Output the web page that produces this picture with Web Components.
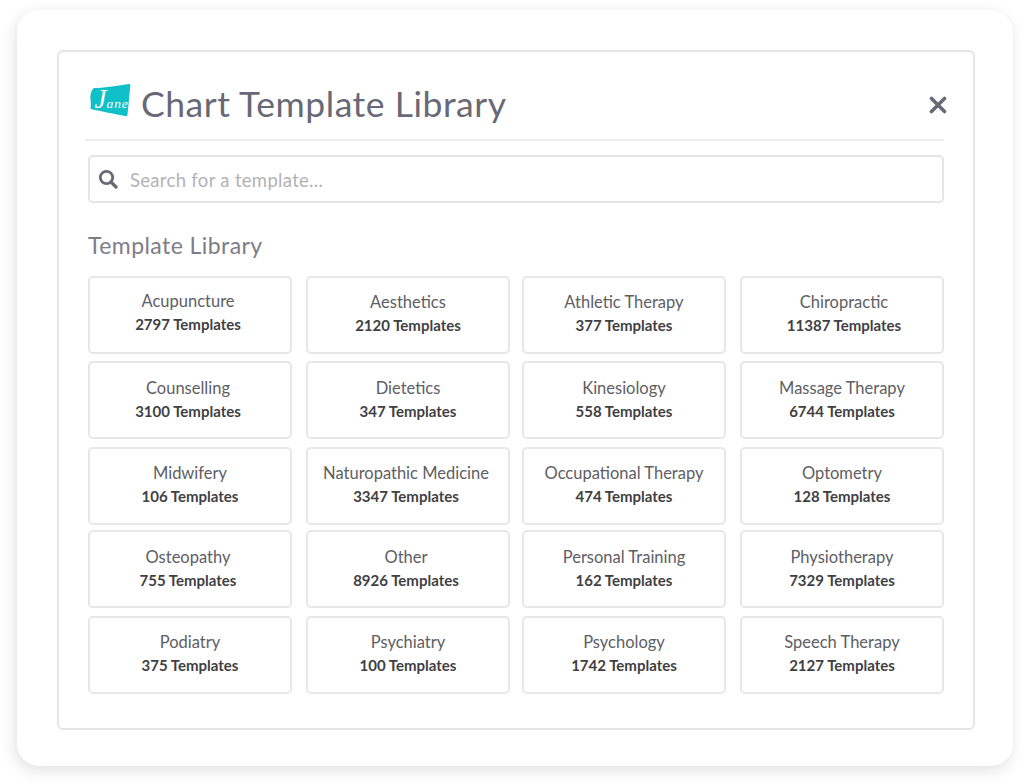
<!DOCTYPE html>
<html lang="en"><head><meta charset="utf-8"><title>Chart Template Library</title>
<style>
html,body{margin:0;padding:0;background:#fff}
body{width:1024px;height:784px;overflow:hidden;font-family:Lato,"Noto Sans",sans-serif}
</style></head>
<body>
<app-frame>
  <library-panel>
    <panel-header slot="header">Chart Template Library</panel-header>
    <search-box slot="search" placeholder="Search for a template..."></search-box>
    <span slot="title">Template Library</span>
    <template-grid>
      <template-card dx="-2" top="25" name="Acupuncture" count="2797 Templates"></template-card>
      <template-card top="26" name="Aesthetics" count="2120 Templates"></template-card>
      <template-card top="26" name="Athletic Therapy" count="377 Templates"></template-card>
      <template-card dx="2" top="26" name="Chiropractic" count="11387 Templates"></template-card>
      <template-card dx="-2" top="27" name="Counselling" count="3100 Templates"></template-card>
      <template-card top="27" name="Dietetics" count="347 Templates"></template-card>
      <template-card top="27" name="Kinesiology" count="558 Templates"></template-card>
      <template-card top="27" name="Massage Therapy" count="6744 Templates"></template-card>
      <template-card top="26" name="Midwifery" count="106 Templates"></template-card>
      <template-card dx="-2" top="26" name="Naturopathic Medicine" count="3347 Templates"></template-card>
      <template-card top="26" name="Occupational Therapy" count="474 Templates"></template-card>
      <template-card top="26" name="Optometry" count="128 Templates"></template-card>
      <template-card dx="-2" top="27" name="Osteopathy" count="755 Templates"></template-card>
      <template-card dx="-2" top="27" name="Other" count="8926 Templates"></template-card>
      <template-card top="27" name="Personal Training" count="162 Templates"></template-card>
      <template-card top="27" name="Physiotherapy" count="7329 Templates"></template-card>
      <template-card top="26" name="Podiatry" count="375 Templates"></template-card>
      <template-card top="26" name="Psychiatry" count="100 Templates"></template-card>
      <template-card top="26" name="Psychology" count="1742 Templates"></template-card>
      <template-card top="26" name="Speech Therapy" count="2127 Templates"></template-card>
    </template-grid>
  </library-panel>
</app-frame>
<script>
function def(tag, html, init){
  customElements.define(tag, class extends HTMLElement{
    constructor(){super();this.attachShadow({mode:'open'}).innerHTML=html;}
    connectedCallback(){if(init)init(this,this.shadowRoot);}
  });
}
def('app-frame',`<style>
:host{display:block;box-sizing:border-box;width:996px;height:756px;margin:10px 0 0 17px;padding:40px 38px 36px 40px;background:#fff;border-radius:22px;box-shadow:-2px 5px 16px rgba(0,0,0,.11),0 0 6px rgba(0,0,0,.025)}
</style><slot></slot>`);
def('library-panel',`<style>
:host{display:block;box-sizing:border-box;width:918px;height:680px;border:2px solid #e5e5e7;border-radius:6px;padding:0 29px;color:#686877}
.t{font-size:23px;letter-spacing:.43px;color:#7d7d88;line-height:30px;margin:27px 0 16px}
</style><slot name="header"></slot><slot name="search"></slot><div class="t"><slot name="title"></slot></div><slot></slot>`);
def('panel-header',`<style>
:host{display:flex;align-items:center;box-sizing:border-box;height:89px;margin:0 0 14px -3px;width:859px;border-bottom:2px solid #eeeef0;padding:17px 0 0 4px}
svg.logo{width:42px;height:36px;flex:none;margin-right:10px;margin-top:-7px}
.h{font-size:35.500px;letter-spacing:.54px;color:#686876;line-height:44px;flex:1;white-space:nowrap}
svg.x{width:18px;height:18px;flex:none;margin-right:-3px;margin-top:2px}
</style>
<svg class="logo" viewBox="0 0 42 36"><path d="M5 5 C14 5 26 3 40 1 C41 1 41.500 2 41.300 3 L38.500 31.500 C38.400 33 37.500 33.500 36 33 C26 31 12 28.500 2 26 C1 25 2.500 22 1.500 17 C1 13 2 7 5 5Z" fill="#0fc0c8"/>
<text x="5.500" y="25" font-family="'Liberation Serif',serif" font-style="italic" fill="#fff"><tspan font-size="27">J</tspan><tspan font-size="13.500" letter-spacing=".9">ane</tspan></text></svg>
<span class="h"><slot></slot></span>
<svg class="x" viewBox="0 0 18 18"><path d="M2.500 2.500L15.500 15.500M15.500 2.500L2.500 15.500" stroke="#686877" stroke-width="3.600" stroke-linecap="round"/></svg>`);
def('search-box',`<style>
:host{display:flex;align-items:center;box-sizing:border-box;width:856px;height:48px;border:2px solid #e5e5e7;border-radius:5px;padding:0 0 0 8px;background:#fff}
svg{width:20px;height:20px;flex:none;margin-right:12px}
.p{font-size:18.500px;letter-spacing:.31px;color:#b2b2b6;white-space:nowrap;padding-top:2px}
</style>
<svg viewBox="0 0 20 20"><circle cx="8.500" cy="8.500" r="6.200" fill="none" stroke="#686877" stroke-width="2.800"/><path d="M13 13L18 18" stroke="#686877" stroke-width="3.200" stroke-linecap="round"/></svg>
<span class="p"></span>`,(h,s)=>{s.querySelector('.p').textContent=h.getAttribute('placeholder');});
def('template-grid',`<style>
:host{display:grid;grid-template-columns:218px 216px 218px 204px;grid-template-rows:85px 86px 83px 86px 78px;justify-items:start;align-items:start}
</style><slot></slot>`);
def('template-card',`<style>
:host{display:block;box-sizing:border-box;width:204px;height:78px;border:2px solid #e7e7e9;border-radius:5px;text-align:center;background:#fff;padding-top:var(--top,26px);padding-right:var(--pr,0);padding-left:var(--pl,0)}
.n{font-size:16.500px;line-height:24px;color:#5e5e64;white-space:nowrap;margin-top:-14px}
.c{font-size:15px;line-height:22px;font-weight:700;color:#3f3f44;white-space:nowrap}
</style><div class="n"></div><div class="c"></div>`,(h,s)=>{
  s.querySelector('.n').textContent=h.getAttribute('name');
  s.querySelector('.c').textContent=h.getAttribute('count');
  const dx=+(h.getAttribute('dx')||0),top=+(h.getAttribute('top')||26);
  h.style.setProperty('--top',top+'px');
  if(dx<0)h.style.setProperty('--pr',(-2*dx)+'px');
  if(dx>0)h.style.setProperty('--pl',(2*dx)+'px');
});
</script>
</body></html>
